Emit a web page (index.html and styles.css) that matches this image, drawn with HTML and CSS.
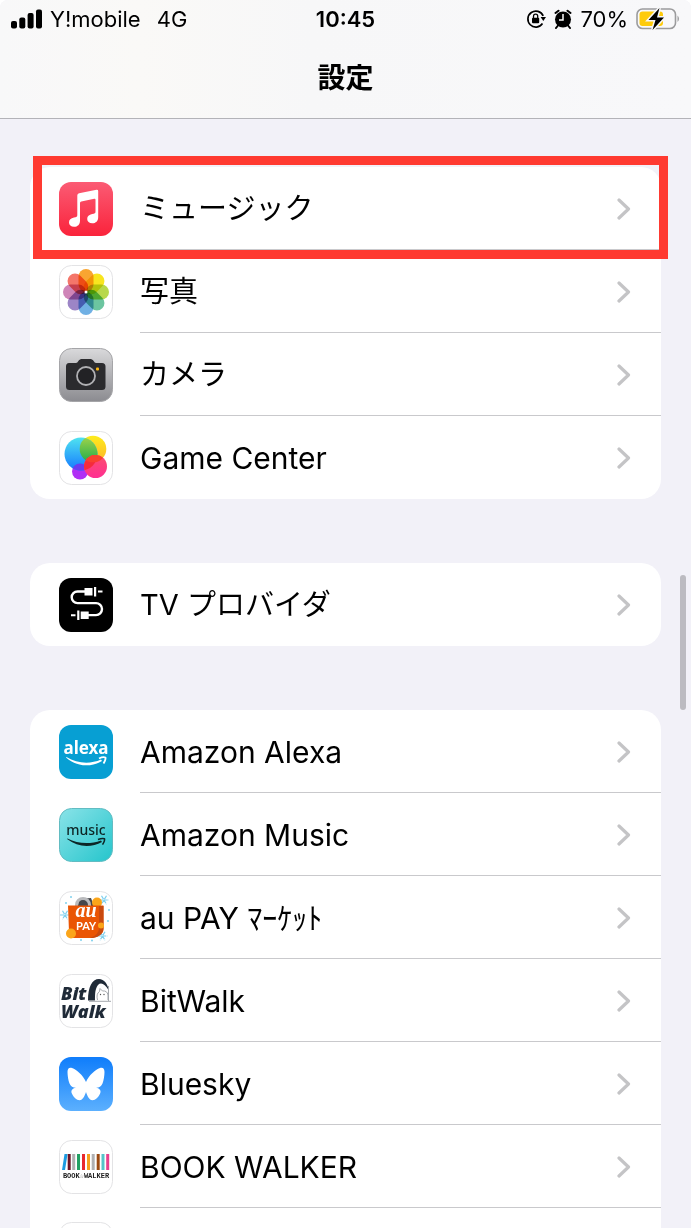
FILE: index.html
```html
<!DOCTYPE html>
<html lang="ja">
<head>
    <meta charset="UTF-8">
    <meta name="viewport" content="width=device-width, initial-scale=1.0">
    <title>設定</title>
    <link rel="stylesheet" href="styles.css">
</head>
<body>
    <!-- 共通の矢印 -->
    <svg class="defs" aria-hidden="true">
        <symbol id="chevron" viewBox="0 0 14 22">
            <path d="M2 2l9.500 9L2 20" fill="none" stroke="#c4c4c6" stroke-width="3.200" stroke-linecap="round" stroke-linejoin="round"/>
        </symbol>
    </svg>

    <div class="screen">
        <header class="header">
            <div class="status-bar">
                <div class="status-left">
                    <svg class="signal" viewBox="0 0 31 20" aria-hidden="true">
                        <rect x="0" y="12" width="6" height="7.500" rx="2"/>
                        <rect x="8.300" y="8.500" width="6" height="11" rx="2"/>
                        <rect x="16.600" y="4" width="6" height="15.500" rx="2"/>
                        <rect x="25" y="0.500" width="6" height="19" rx="2"/>
                    </svg>
                    <span>Y!mobile</span>
                    <span class="network">4G</span>
                </div>
                <div class="clock">10:45</div>
                <div class="status-right">
                    <svg class="lock" viewBox="0 0 20 20" aria-hidden="true">
                        <path d="M17.200 6.800A8 8 0 1 0 16.500 14.600" fill="none" stroke="#000" stroke-width="1.700"/>
                        <path d="M14.600 8h5.400l-2.700 4z"/>
                        <rect x="6" y="8.800" width="7.200" height="5.500" rx="1"/>
                        <path d="M7.500 9V7.300a2.100 2.100 0 0 1 4.200 0V9" fill="none" stroke="#000" stroke-width="1.300"/>
                    </svg>
                    <svg class="alarm" viewBox="0 0 18 20" aria-hidden="true">
                        <circle cx="9" cy="10.500" r="8"/>
                        <path d="M1.500 4L4.500 1.700M16.500 4L13.500 1.700M4 16.500l-2 2.500M14 16.500l2 2.500" stroke="#000" stroke-width="2" stroke-linecap="round"/>
                        <path d="M9 5v6H5" fill="none" stroke="#fff" stroke-width="1.500"/>
                    </svg>
                    <span>70%</span>
                    <svg class="battery" viewBox="0 0 44 24" aria-hidden="true">
                        <rect x="1" y="2" width="38.500" height="19.500" rx="5.500" fill="none" stroke="#9b9b9d" stroke-width="1.600"/>
                        <path d="M41.500 8.500q3 3 0 6.500z" fill="#9b9b9d"/>
                        <rect x="3.500" y="4.500" width="23.500" height="14.500" rx="3" fill="#fecb0b"/>
                        <path d="M23.500 1L12.500 13h7L16.500 23 28 10.500h-7z" stroke="#f7f7f8" stroke-width="3"/>
                        <path d="M23.500 1L12.500 13h7L16.500 23 28 10.500h-7z"/>
                    </svg>
                </div>
            </div>
            <h1 class="title">設定</h1>
        </header>

        <main class="content">
            <ul class="group">
                <li class="row highlight">
                    <a href="#music">
                        <svg class="icon" viewBox="0 0 54 54" aria-hidden="true">
                            <defs>
                                <linearGradient id="musicBg" x1="0" y1="0" x2="0" y2="1">
                                    <stop offset="0" stop-color="#fb5b74"/>
                                    <stop offset="1" stop-color="#fa233b"/>
                                </linearGradient>
                            </defs>
                            <rect width="54" height="54" rx="12" fill="url(#musicBg)"/>
                            <path d="M18.300 13.500q0-1.800 1.800-2.200L37.500 7.800q1.700-.3 1.700 1.400V35c0 4-2.300 6.300-6 6.300-3 0-5-1.800-5-4.300 0-2.600 1.800-4.300 5-4.900 2.500-.4 3.300-.7 3.300-2.600V17.800q0-1.300-1.300-1L22.300 19.400q-1.300.3-1.300 1.600V38.500c0 4-2.300 6.300-6 6.300-3 0-5-1.800-5-4.300 0-2.600 1.800-4.300 5-4.900 2.500-.4 3.300-.7 3.300-2.600z" fill="#fff"/>
                        </svg>
                        <span class="label kana">ミュージック</span>
                        <svg class="chevron" aria-hidden="true"><use href="#chevron"/></svg>
                    </a>
                </li>
                <li class="row">
                    <a href="#photos">
                        <svg class="icon" viewBox="0 0 54 54" aria-hidden="true">
                            <rect class="tile" x="0.500" y="0.500" width="53" height="53" rx="12"/>
                            <g class="petals">
                                <rect x="19.500" y="4" width="15" height="23" rx="7.500" fill="#f9a531"/>
                                <rect x="19.500" y="4" width="15" height="23" rx="7.500" fill="#f8e51f" transform="rotate(45 27 27)"/>
                                <rect x="19.500" y="4" width="15" height="23" rx="7.500" fill="#b8d84c" transform="rotate(90 27 27)"/>
                                <rect x="19.500" y="4" width="15" height="23" rx="7.500" fill="#6cc5a0" transform="rotate(135 27 27)"/>
                                <rect x="19.500" y="4" width="15" height="23" rx="7.500" fill="#70b0e4" transform="rotate(180 27 27)"/>
                                <rect x="19.500" y="4" width="15" height="23" rx="7.500" fill="#9c85c6" transform="rotate(225 27 27)"/>
                                <rect x="19.500" y="4" width="15" height="23" rx="7.500" fill="#cf85b8" transform="rotate(270 27 27)"/>
                                <rect x="19.500" y="4" width="15" height="23" rx="7.500" fill="#f4766a" transform="rotate(315 27 27)"/>
                            </g>
                            <circle cx="27" cy="27" r="1.500" fill="#fff"/>
                        </svg>
                        <span class="label kana">写真</span>
                        <svg class="chevron" aria-hidden="true"><use href="#chevron"/></svg>
                    </a>
                </li>
                <li class="row">
                    <a href="#camera">
                        <svg class="icon" viewBox="0 0 54 54" aria-hidden="true">
                            <defs>
                                <linearGradient id="cameraBg" x1="0" y1="0" x2="0" y2="1">
                                    <stop offset="0" stop-color="#d9d9db"/>
                                    <stop offset="1" stop-color="#8b8b90"/>
                                </linearGradient>
                            </defs>
                            <rect x="0.500" y="0.500" width="53" height="53" rx="12" fill="url(#cameraBg)" stroke="#a5a5a8"/>
                            <path d="M10 15h7c2 0 2.500-4 5.500-4h9c3 0 3.500 4 5.500 4h6q3.500 0 3.500 3.500v20q0 3.500-3.500 3.500H10.500Q7 42 7 38.500v-20Q7 15 10 15z" fill="#2b2b2e"/>
                            <circle cx="27" cy="28" r="9" fill="#222225" stroke="#b0b0b3" stroke-width="1.800"/>
                            <rect x="37" y="19.500" width="3" height="3" rx="1" fill="#fdb813"/>
                        </svg>
                        <span class="label kana">カメラ</span>
                        <svg class="chevron" aria-hidden="true"><use href="#chevron"/></svg>
                    </a>
                </li>
                <li class="row">
                    <a href="#game-center">
                        <svg class="icon" viewBox="0 0 54 54" aria-hidden="true">
                            <defs>
                                <linearGradient id="gcBlue" x1="0" y1="0" x2="0" y2="1">
                                    <stop offset="0" stop-color="#4fe3f0"/>
                                    <stop offset="1" stop-color="#1579ff"/>
                                </linearGradient>
                                <linearGradient id="gcYellow" x1="0" y1="0" x2="0" y2="1">
                                    <stop offset="0" stop-color="#fdec1c"/>
                                    <stop offset="1" stop-color="#fdb52a"/>
                                </linearGradient>
                                <linearGradient id="gcGreen" x1="0" y1="0" x2="0" y2="1">
                                    <stop offset="0" stop-color="#a5d54a"/>
                                    <stop offset="1" stop-color="#22ac4b"/>
                                </linearGradient>
                                <linearGradient id="gcPink" x1="0" y1="0" x2="0" y2="1">
                                    <stop offset="0" stop-color="#fb4f6d"/>
                                    <stop offset="1" stop-color="#ff2f92"/>
                                </linearGradient>
                                <clipPath id="gcBlueClip"><circle cx="22" cy="23" r="16.500"/></clipPath>
                                <clipPath id="gcYellowClip"><circle cx="34" cy="18" r="13.300"/></clipPath>
                            </defs>
                            <rect class="tile" x="0.500" y="0.500" width="53" height="53" rx="12"/>
                            <circle cx="34" cy="18" r="13.300" fill="url(#gcYellow)"/>
                            <circle cx="21" cy="40.500" r="8" fill="#b02ff5"/>
                            <circle cx="22" cy="23" r="16.500" fill="url(#gcBlue)"/>
                            <circle cx="34" cy="18" r="13.300" fill="url(#gcGreen)" clip-path="url(#gcBlueClip)"/>
                            <circle cx="21" cy="40.500" r="8" fill="#6a3cf0" clip-path="url(#gcBlueClip)"/>
                            <circle cx="36.500" cy="35.500" r="11.500" fill="url(#gcPink)"/>
                            <circle cx="36.500" cy="35.500" r="11.500" fill="#f52b3c" clip-path="url(#gcBlueClip)"/>
                            <circle cx="36.500" cy="35.500" r="11.500" fill="#f8402f" clip-path="url(#gcYellowClip)"/>
                        </svg>
                        <span class="label">Game Center</span>
                        <svg class="chevron" aria-hidden="true"><use href="#chevron"/></svg>
                    </a>
                </li>
            </ul>

            <ul class="group">
                <li class="row">
                    <a href="#tv-provider">
                        <svg class="icon" viewBox="0 0 54 54" aria-hidden="true">
                            <rect width="54" height="54" rx="12" fill="#000"/>
                            <path d="M26 13.500H18.500a5.800 5.800 0 0 0 0 11.600H37a6 6 0 0 1 0 12H29" fill="none" stroke="#fff" stroke-width="2.400"/>
                            <path d="M25.500 10h8v7.500h-8zM35 9h2.200v9.500H35zM39 12.500h4.500v2H39zM21.700 33.500h8V41h-8zM18.200 32.500h2.200V42h-2.200zM12 36.200h4.500v2H12z" fill="#fff"/>
                        </svg>
                        <span class="label kana">TV プロバイダ</span>
                        <svg class="chevron" aria-hidden="true"><use href="#chevron"/></svg>
                    </a>
                </li>
            </ul>

            <ul class="group">
                <li class="row">
                    <a href="#alexa">
                        <svg class="icon" viewBox="0 0 54 54" aria-hidden="true">
                            <rect width="54" height="54" rx="12" fill="#079fd3"/>
                            <text class="alexa-text" x="27" y="29">alexa</text>
                            <path d="M7 32.500C18 42 32 42.500 43 36l-1-1.500C31 39.500 18 38.500 7.500 32z" fill="#fff"/>
                            <path d="M40 33.500q4-2 6.500-1 .5 2-2 6" fill="none" stroke="#fff" stroke-width="1.800" stroke-linejoin="round"/>
                        </svg>
                        <span class="label">Amazon Alexa</span>
                        <svg class="chevron" aria-hidden="true"><use href="#chevron"/></svg>
                    </a>
                </li>
                <li class="row">
                    <a href="#amazon-music">
                        <svg class="icon" viewBox="0 0 54 54" aria-hidden="true">
                            <defs>
                                <linearGradient id="amBg" x1="0" y1="0" x2="1" y2="1">
                                    <stop offset="0" stop-color="#8ae3e8"/>
                                    <stop offset="1" stop-color="#25c5cc"/>
                                </linearGradient>
                            </defs>
                            <rect x="0.500" y="0.500" width="53" height="53" rx="12" fill="url(#amBg)" stroke="#62bcc2"/>
                            <text class="amusic-text" x="27" y="27">music</text>
                            <path d="M8 31C19 39.500 32 40 43 34l-1-1.500C31 36.500 19 36 8.500 30.500z" fill="#0d2626"/>
                            <path d="M39 31.500q4-1.500 6.500-.8.500 2-2 6" fill="none" stroke="#0d2626" stroke-width="1.600" stroke-linejoin="round"/>
                        </svg>
                        <span class="label">Amazon Music</span>
                        <svg class="chevron" aria-hidden="true"><use href="#chevron"/></svg>
                    </a>
                </li>
                <li class="row">
                    <a href="#au-pay-market">
                        <svg class="icon" viewBox="0 0 54 54" aria-hidden="true">
                            <defs>
                                <path id="snow" d="M-5 0H5M-2.500-4.300L2.500 4.300M2.500-4.300L-2.500 4.300" stroke="#7fd0ee" stroke-width="1.200" stroke-dasharray="4 .8"/>
                            </defs>
                            <rect class="tile" x="0.500" y="0.500" width="53" height="53" rx="12"/>
                            <use href="#snow" x="45" y="9"/>
                            <use href="#snow" x="6" y="24"/>
                            <use href="#snow" x="43.500" y="45"/>
                            <g fill="#7fd0ee">
                                <circle cx="12" cy="6" r="1"/>
                                <circle cx="7" cy="12" r="1"/>
                                <circle cx="50" cy="19" r="1"/>
                                <circle cx="49" cy="30" r="1"/>
                                <circle cx="22" cy="49" r="1"/>
                                <circle cx="33" cy="49.500" r="1"/>
                            </g>
                            <path d="M20 8l12-1 3 8H19z" fill="#45474c"/>
                            <path d="M17.500 16v-2a6.500 6.500 0 0 1 13 0v2" fill="none" stroke="#b9babd" stroke-width="3"/>
                            <circle cx="38" cy="11.500" r="5" fill="#fba51a"/>
                            <path d="M9 14.500h35.500V38q0 4-4 6-3 3-7 3H14q-4-1-4-6z" fill="#ea5504"/>
                            <path d="M40 15v22q0 7-9 10h3q10-2 10.500-9V15z" fill="#c94a10"/>
                            <circle cx="12" cy="42.500" r="5" fill="#fba51a"/>
                            <circle cx="42" cy="34.500" r="3" fill="#fba51a"/>
                            <text class="au-text" x="27" y="26">au</text>
                            <text class="pay-text" x="27" y="39">PAY</text>
                        </svg>
                        <span class="label">au PAY ﾏｰｹｯﾄ</span>
                        <svg class="chevron" aria-hidden="true"><use href="#chevron"/></svg>
                    </a>
                </li>
                <li class="row">
                    <a href="#bitwalk">
                        <svg class="icon" viewBox="0 0 54 54" aria-hidden="true">
                            <rect class="tile" x="0.500" y="0.500" width="53" height="53" rx="12"/>
                            <text class="bit-text"><tspan x="2" y="26">Bit</tspan><tspan x="2" y="44">Walk</tspan></text>
                            <path d="M29 26.500C29 13 33 5 40 5c5 0 9 5 9.500 11C46 10 42 8 39 11c-3 4-3 9-3 15.500z" fill="#1f2a37"/>
                            <path d="M38.500 26c-1-4-.5-7 2-8.500l.5-3 2.500 2.500c3-.5 5 1 5.500 4v5M49.500 12v15M30 27.300h22" fill="none" stroke="#a4a8ad"/>
                            <circle cx="41.500" cy="20.500" r=".7" fill="#555"/>
                            <circle cx="45" cy="20.500" r=".7" fill="#555"/>
                        </svg>
                        <span class="label">BitWalk</span>
                        <svg class="chevron" aria-hidden="true"><use href="#chevron"/></svg>
                    </a>
                </li>
                <li class="row">
                    <a href="#bluesky">
                        <svg class="icon" viewBox="0 0 54 54" aria-hidden="true">
                            <defs>
                                <linearGradient id="bskyBg" x1="0" y1="0" x2="0" y2="1">
                                    <stop offset="0" stop-color="#0f7dfb"/>
                                    <stop offset="1" stop-color="#5cb0fe"/>
                                </linearGradient>
                            </defs>
                            <rect width="54" height="54" rx="12" fill="url(#bskyBg)"/>
                            <path d="M27 25C24 18.500 18 12.500 13 11c-3-.8-4.500.8-4.500 4 0 3.500.8 8.500 2 11.500 1 2.800 3.500 4.300 6.500 4.300-4 .7-5.500 3-4 6 1.500 3.500 4.500 6.500 7.500 6.500 3.500-.3 5.200-4.500 6.500-8.300 1.300 3.800 3 8 6.500 8.300 3 0 6-3 7.500-6.500 1.500-3 0-5.300-4-6 3 0 5.500-1.500 6.500-4.300 1.200-3 2-8 2-11.500 0-3.200-1.500-4.800-4.500-4-5 1.500-11 7.500-14 14z" fill="#fff"/>
                        </svg>
                        <span class="label">Bluesky</span>
                        <svg class="chevron" aria-hidden="true"><use href="#chevron"/></svg>
                    </a>
                </li>
                <li class="row">
                    <a href="#book-walker">
                        <svg class="icon" viewBox="0 0 54 54" aria-hidden="true">
                            <rect class="tile" x="0.500" y="0.500" width="53" height="53" rx="12"/>
                            <path d="M5.500 14H8.500L6 30H3z" fill="#1c9be0"/>
                            <rect x="8.700" y="14" width="3" height="16" fill="#6b1426"/>
                            <rect x="13.200" y="14" width="3" height="16" fill="#b0b0b2"/>
                            <rect x="18" y="14" width="3" height="16" fill="#23a063"/>
                            <rect x="23" y="14" width="3" height="16" fill="#e8292f"/>
                            <rect x="28" y="14" width="3" height="16" fill="#f6a01d"/>
                            <rect x="32.700" y="14" width="3" height="16" fill="#b0b0b2"/>
                            <rect x="37.700" y="14" width="3" height="16" fill="#9c4a12"/>
                            <rect x="42.500" y="14" width="3" height="16" fill="#56c3c9"/>
                            <rect x="47.200" y="14" width="3" height="16" fill="#ea3f8c"/>
                            <text class="book-text" x="27" y="38">BOOK☆WALKER</text>
                        </svg>
                        <span class="label">BOOK WALKER</span>
                        <svg class="chevron" aria-hidden="true"><use href="#chevron"/></svg>
                    </a>
                </li>
                <li class="row">
                    <svg class="icon" viewBox="0 0 54 54" aria-hidden="true">
                        <rect class="tile" x="0.500" y="0.500" width="53" height="53" rx="12"/>
                    </svg>
                </li>
            </ul>
        </main>

        <div class="scrollbar"></div>
    </div>
</body>
</html>
```
FILE: styles.css
```css
* {
    box-sizing: border-box;
}

body {
    margin: 0;
    background: #fff;
    color: #000;
    font-family: Inter, "Noto Sans CJK JP", sans-serif;
}

.defs {
    position: absolute;
    width: 0;
    height: 0;
}

.screen {
    position: relative;
    display: flex;
    flex-direction: column;
    height: 100vh;
    overflow: hidden;
    background: #f2f1f8;
    border-radius: 8px 8px 0 0;
}

/* ヘッダー */
.header {
    flex: none;
    height: 119px;
    background: linear-gradient(90deg, #f8f8f9, #faf9f7 20%, #f7f7f8 45%, #f8f8fa);
    border-bottom: 1px solid #b3b3b8;
}

.status-bar {
    display: grid;
    grid-template-columns: 1fr auto 1fr;
    align-items: center;
    height: 38px;
    padding: 0 11px;
    font-size: 22px;
    line-height: 38px;
}

.status-left,
.status-right {
    display: flex;
    align-items: center;
    gap: 8px;
}

.status-right {
    justify-content: flex-end;
}

.signal {
    width: 31px;
    height: 20px;
}

.network {
    margin-left: 8px;
}

.clock {
    font-weight: 600;
}

.lock {
    width: 20px;
    height: 20px;
}

.alarm {
    width: 18px;
    height: 20px;
}

.battery {
    width: 44px;
    height: 24px;
}

.title {
    margin: 0;
    font-size: 28px;
    font-weight: 700;
    line-height: 80px;
    text-align: center;
}

/* 設定リスト */
.content {
    flex: 1;
    min-height: 0;
    padding: 48px 30px 0;
    overflow: hidden;
}

.group {
    margin: 0 0 64px;
    padding: 0;
    list-style: none;
    background: #fff;
    border-radius: 20px;
}

.row {
    position: relative;
    height: 83px;
    padding-left: 29px;
}

.row a {
    display: flex;
    align-items: center;
    gap: 27px;
    height: 100%;
    padding-right: 30px;
    color: inherit;
    text-decoration: none;
}

.row > .icon {
    margin-top: 14px;
}

/* 区切り線はラベルの左端から */
.row:not(:last-child)::after {
    content: "";
    position: absolute;
    left: 110px;
    right: 0;
    bottom: 0;
    height: 1px;
    background: #c9c9cc;
}

.highlight::before {
    content: "";
    position: absolute;
    z-index: 1;
    top: -11px;
    right: -7px;
    bottom: -9px;
    left: 3px;
    border: 9px solid #ff3a31;
    pointer-events: none;
}

.label {
    flex: 1;
    font-size: 30px;
    line-height: 40px;
    white-space: nowrap;
}

.kana {
    font-size: 29px;
}

.chevron {
    width: 14px;
    height: 22px;
}

.scrollbar {
    position: absolute;
    top: 575px;
    right: 5px;
    width: 6px;
    height: 135px;
    background: #bcbbc1;
    border-radius: 3px;
}

/* アイコン */
.icon {
    flex: none;
    width: 54px;
    height: 54px;
}

.tile {
    fill: #fff;
    stroke: #e3e3e5;
}

.petals {
    isolation: isolate;
}

.petals rect {
    mix-blend-mode: multiply;
}

.icon text {
    text-anchor: middle;
}

.alexa-text {
    font: 700 17px "Noto Sans", sans-serif;
    fill: #fff;
}

.amusic-text {
    font: 500 14px "Noto Sans", sans-serif;
    fill: #0d2626;
}

.au-text {
    font: italic 700 20px "Liberation Serif", serif;
    fill: #fff;
}

.pay-text {
    font: 700 11px Lato, sans-serif;
    fill: #fff;
}

.icon .bit-text {
    font: italic 800 18px "Open Sans", sans-serif;
    fill: #1f2a37;
    text-anchor: start;
}

.book-text {
    font: 700 7px "Liberation Mono", "DejaVu Sans Mono", monospace;
    fill: #222;
}
```
